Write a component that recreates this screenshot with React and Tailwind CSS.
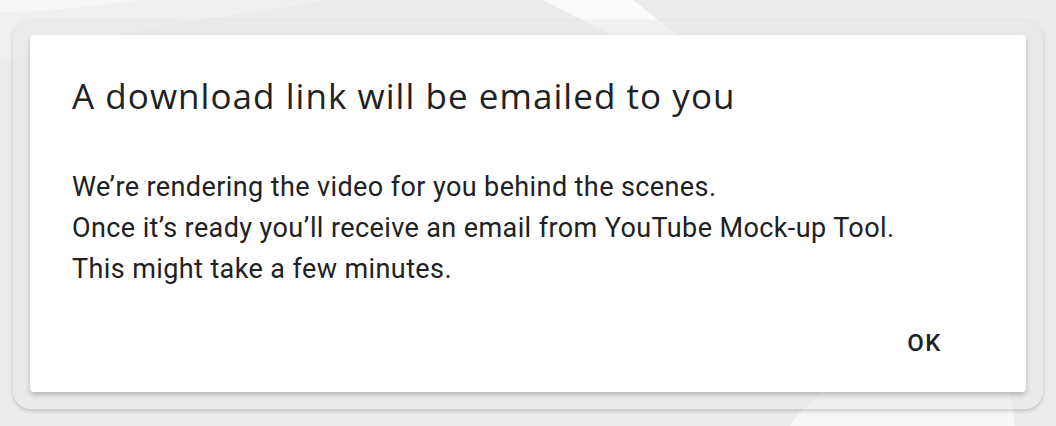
import React from "react";

const Backdrop = () => (
  <svg className="absolute inset-0" width="1056" height="426" viewBox="0 0 1056 426">
    <rect width="1056" height="426" fill="#ececec" />
    <path d="M0 0 L140 0 C80 8 40 12 0 12 Z" fill="#fafafa" />
    <path d="M0 0 L330 0 C200 20 120 30 0 60 Z" fill="#f3f3f3" opacity="0.6" />
    <path d="M543 0 L633 0 L760 100 L740 100 Z" fill="#fbfbfb" />
    <path d="M823 391 L1010 391 L1015 426 L790 426 Q800 410 823 391 Z" fill="#f7f7f7" />
  </svg>
);

const App = () => {
  return (
    <div className="relative w-[1056px] h-[426px] overflow-hidden bg-[#ececec]">
      <Backdrop />
      <div className="relative pt-[20px] pl-[13px]">
        <div className="w-[1030px] h-[389px] rounded-[18px] bg-[#e9e9e9]/60 shadow-[0_2px_4px_rgba(0,0,0,0.18)] pt-[15px] pl-[17px]">
          <div className="flex flex-col w-[996px] h-[357px] rounded-[4px] bg-white shadow-[0_3px_5px_rgba(0,0,0,0.22)] pl-[42px] pr-[84px]">
            <h2
              className="mt-[41px] text-[35px] leading-[40px] tracking-[1.05px] text-[#202124]"
              style={{ fontFamily: "'Open Sans', Lato, sans-serif", fontWeight: 500 }}
            >
              A download link will be emailed to you
            </h2>
            <div
              className="mt-[51px] text-[27px] leading-[41px] tracking-[0.4px] text-[#202124]"
              style={{ fontFamily: "Roboto, 'Liberation Sans', sans-serif" }}
            >
              <p>We’re rendering the video for you behind the scenes.</p>
              <p>Once it’s ready you’ll receive an email from YouTube Mock-up Tool.</p>
              <p>This might take a few minutes.</p>
            </div>
            <div className="mt-auto mb-[37px] flex justify-end">
              <button
                className="text-[24px] leading-[24px] font-medium tracking-[1.5px] text-[#202124]"
                style={{ fontFamily: "Roboto, 'Liberation Sans', sans-serif" }}
              >
                OK
              </button>
            </div>
          </div>
        </div>
      </div>
    </div>
  );
};

export default App;
